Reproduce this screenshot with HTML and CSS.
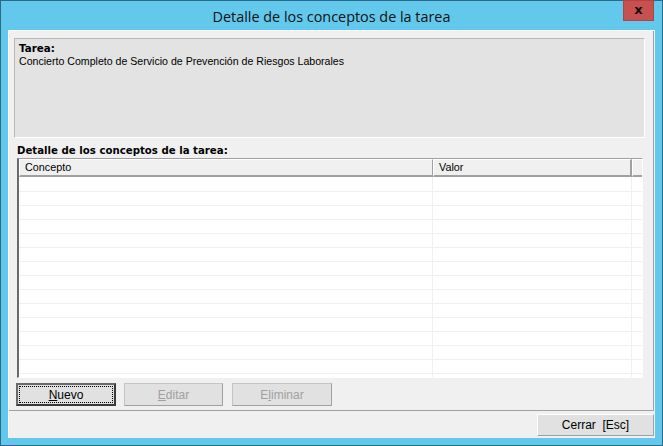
FILE: index.html
```html
<!DOCTYPE html>
<html>
<head>
<meta charset="utf-8">
<link rel="stylesheet" href="styles.css">
</head>
<body>
<div class="window">
  <div class="titlebar">
    <span class="title">Detalle de los conceptos de la tarea</span>
    <div class="close">x</div>
  </div>
  <div class="client">
    <div class="main">
      <div class="task-panel">
        <div class="task-label">Tarea:</div>
        <div class="task-text">Concierto Completo de Servicio de Prevención de Riesgos Laborales</div>
      </div>
      <div class="grid-label">Detalle de los conceptos de la tarea:</div>
      <div class="grid">
        <div class="grid-head">
          <div class="hcell c1">Concepto</div>
          <div class="hcell c2">Valor</div>
          <div class="hcell c3"></div>
        </div>
        <div class="grid-body">
          <div class="vline v1"></div>
          <div class="vline v2"></div>
        </div>
      </div>
      <div class="actions">
        <button class="btn focused"><span class="focus-ring"><u>N</u>uevo</span></button>
        <button class="btn disabled"><u>E</u>ditar</button>
        <button class="btn disabled">E<u>l</u>iminar</button>
      </div>
    </div>
    <div class="footer">
      <button class="btn close-btn">Cerrar&nbsp; [Esc]</button>
    </div>
  </div>
</div>
</body>
</html>
```
FILE: styles.css
```css
html, body {
  margin: 0;
  padding: 0;
}
body {
  width: 663px;
  height: 446px;
  overflow: hidden;
  font-family: "Liberation Sans", Arial, sans-serif;
  font-size: 11px;
}
.window {
  box-sizing: border-box;
  width: 663px;
  height: 446px;
  border: 1px solid #2a6a88;
  background: #62c8ec;
  display: flex;
  flex-direction: column;
}
.titlebar {
  height: 29px;
  position: relative;
  display: flex;
  align-items: center;
  justify-content: center;
}
.title {
  font-family: "Open Sans", "Noto Sans", sans-serif;
  font-size: 14.4px;
  color: #111;
  margin-top: 1px;
}
.close {
  position: absolute;
  right: 8px;
  top: -1px;
  width: 31px;
  height: 21px;
  background: #c75050;
  color: #111;
  font-family: "DejaVu Sans", sans-serif;
  font-weight: bold;
  font-size: 13px;
  display: flex;
  align-items: center;
  justify-content: center;
  line-height: 1;
  padding-bottom: 2px;
  box-sizing: border-box;
  border: 1px solid #b04444;
}
.client {
  flex: 1;
  margin: 0 7px 7px 7px;
  background: #f0f0f0;
  border-top: 1px solid #fff;
  border-left: 1px solid #fff;
  display: flex;
  flex-direction: column;
}
.main {
  height: 380px;
  box-sizing: border-box;
  border-right: 1px solid #a0a0a0;
  border-bottom: 1px solid #a0a0a0;
  margin-right: 1px;
  padding: 7px 8px 0 5px;
  display: flex;
  flex-direction: column;
}
.task-panel {
  height: 100px;
  box-sizing: border-box;
  background: #e3e3e3;
  border: 1px solid #b9b9b9;
  border-right-color: #fff;
  border-bottom-color: #fff;
  padding: 3px 4px;
}
.task-label {
  font-weight: bold;
  font-family: "DejaVu Sans", sans-serif;
  font-size: 10.3px;
  color: #000;
  line-height: 13px;
}
.task-text {
  line-height: 13px;
  color: #000;
  font-size: 10.6px;
}
.grid-label {
  margin-top: 6px;
  margin-left: 3px;
  font-weight: bold;
  font-family: "DejaVu Sans", sans-serif;
  font-size: 10.2px;
  line-height: 14px;
  color: #000;
}
.grid {
  margin-left: 3px;
  margin-right: 2px;
  height: 220px;
  box-sizing: border-box;
  border-top: 1px solid #a0a0a0;
  border-left: 2px solid #6a6a6a;
  border-right: 1px solid #fff;
  border-bottom: 1px solid #fff;
  background: #fff;
  display: flex;
  flex-direction: column;
}
.grid-head {
  display: flex;
  height: 18px;
  box-sizing: border-box;
  background: #f0f0f0;
}
.hcell {
  box-sizing: border-box;
  height: 18px;
  border-top: 1px solid #fff;
  border-left: 1px solid #fff;
  border-bottom: 2px solid #a0a0a0;
  border-right: 2px solid #a0a0a0;
  padding-left: 5px;
  line-height: 15px;
  color: #000;
  font-size: 10.8px;
}
.c1 { width: 414px; border-right-width: 1px; }
.c2 { width: 199px; }
.c3 { flex: 1; border-right: 0; }
.grid-body {
  flex: 1;
  position: relative;
  background-color: #fff;
  background-image: repeating-linear-gradient(to bottom, #fff 0, #fff 13px, #f0f0f0 13px, #f0f0f0 14px);
  background-position: 0 1px;
}
.vline {
  position: absolute;
  top: 0;
  bottom: 0;
  width: 1px;
  background: #f0f0f0;
}
.v1 { left: 413px; }
.v2 { left: 612px; }
.actions {
  display: flex;
  gap: 8px;
  margin-top: 5px;
  margin-left: 2px;
}
.btn {
  width: 100px;
  height: 23px;
  box-sizing: border-box;
  background: #e1e1e1;
  border: 1px solid #adadad;
  font-family: "Liberation Sans", Arial, sans-serif;
  font-size: 12px;
  color: #000;
  padding: 0;
  margin: 0;
  display: flex;
  align-items: center;
  justify-content: center;
}
.actions .btn:nth-child(2) { width: 99px; margin-right: 1px; }
.btn.focused {
  border: 2px solid #555;
  border-color: #6a6a6a #3a3a3a #3a3a3a #6a6a6a;
  padding: 1px;
}
.focus-ring {
  display: flex;
  align-items: center;
  justify-content: center;
  width: 100%;
  height: 100%;
  box-sizing: border-box;
  border: 1px dotted #000;
}
.btn.disabled {
  color: #a0a0a0;
  border-color: #c4c4c4 #a0a0a0 #a0a0a0 #c4c4c4;
}
.footer {
  display: flex;
  justify-content: flex-end;
  padding: 3px 1px 0 0;
}
.close-btn {
  width: 117px;
  height: 22px;
  border-color: #fff #a0a0a0 #a0a0a0 #fff;
  font-size: 12px;
}
```
